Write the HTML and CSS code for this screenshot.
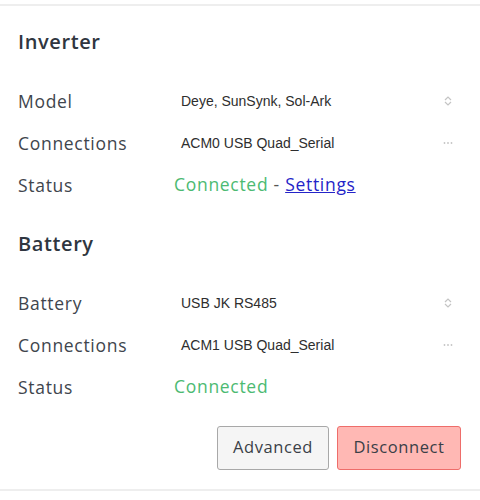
FILE: index.html
```html
<!DOCTYPE html>
<html>
<head>
<meta charset="utf-8">
<link rel="stylesheet" href="styles.css">
</head>
<body>
<div class="card">
  <section class="section first">
    <h2 class="title">Inverter</h2>
    <div class="rows">
      <div class="row">
        <span class="label">Model</span>
        <div class="select"><span class="sel-text">Deye, SunSynk, Sol-Ark</span>
          <svg class="icon" width="10" height="12" viewBox="0 0 10 12"><path d="M2 5 L5 2 L8 5 M2 7 L5 10 L8 7" fill="none" stroke="#c4c4c4" stroke-width="1.2"/></svg>
        </div>
      </div>
      <div class="row">
        <span class="label">Connections</span>
        <div class="select"><span class="sel-text">ACM0 USB Quad_Serial</span>
          <svg class="icon" width="10" height="4" viewBox="0 0 10 4"><circle cx="1.5" cy="2" r="0.9" fill="#c4c4c4"/><circle cx="5" cy="2" r="0.9" fill="#c4c4c4"/><circle cx="8.5" cy="2" r="0.9" fill="#c4c4c4"/></svg>
        </div>
      </div>
      <div class="row">
        <span class="label">Status</span>
        <div class="status"><span class="ok">Connected</span> <span class="dash">-</span> <a class="link" href="#">Settings</a></div>
      </div>
    </div>
  </section>
  <section class="section">
    <h2 class="title">Battery</h2>
    <div class="rows">
      <div class="row">
        <span class="label">Battery</span>
        <div class="select"><span class="sel-text">USB JK RS485</span>
          <svg class="icon" width="10" height="12" viewBox="0 0 10 12"><path d="M2 5 L5 2 L8 5 M2 7 L5 10 L8 7" fill="none" stroke="#c4c4c4" stroke-width="1.2"/></svg>
        </div>
      </div>
      <div class="row">
        <span class="label">Connections</span>
        <div class="select"><span class="sel-text">ACM1 USB Quad_Serial</span>
          <svg class="icon" width="10" height="4" viewBox="0 0 10 4"><circle cx="1.5" cy="2" r="0.9" fill="#c4c4c4"/><circle cx="5" cy="2" r="0.9" fill="#c4c4c4"/><circle cx="8.5" cy="2" r="0.9" fill="#c4c4c4"/></svg>
        </div>
      </div>
      <div class="row">
        <span class="label">Status</span>
        <div class="status"><span class="ok">Connected</span></div>
      </div>
    </div>
  </section>
  <div class="actions">
    <button class="btn btn-default">Advanced</button>
    <button class="btn btn-danger">Disconnect</button>
  </div>
</div>
</body>
</html>
```
FILE: styles.css
```css
html, body {
  margin: 0;
  padding: 0;
  background: #fff;
}
body {
  font-family: "Open Sans", "DejaVu Sans", sans-serif;
  color: #3a3f47;
}
.card {
  margin-top: 4px;
  border-top: 2px solid #eeeeee;
  border-bottom: 2px solid #eeeeee;
  padding: 0 18px 19px 18px;
}
.section {
  padding-top: 24px;
}
.section.first {
  padding-top: 22px;
}
.title {
  margin: 0;
  height: 28px;
  line-height: 28px;
  font-size: 20px;
  font-weight: 600;
  color: #2f3640;
  letter-spacing: 0.6px;
}
.rows {
  margin-top: 24px;
  display: flex;
  flex-direction: column;
}
.row {
  display: grid;
  grid-template-columns: 156px 1fr;
  align-items: center;
  height: 42px;
  line-height: 24px;
}
.label {
  font-size: 17.5px;
  color: #40454d;
  letter-spacing: 0.7px;
}
.select {
  display: flex;
  align-items: center;
  justify-content: space-between;
  padding: 0 9px 0 7px;
}
.sel-text {
  font-family: "Liberation Sans", Arial, sans-serif;
  font-size: 14px;
  color: #2e2e2e;
}
.icon {
  display: block;
}
.status {
  font-size: 17.5px;
  letter-spacing: 0.7px;
  margin-top: -3px;
}
.ok {
  color: #4cba72;
}
.dash {
  color: #555;
}
.link {
  color: #2424c8;
  text-decoration: underline;
}
.actions {
  margin-top: 18px;
  display: flex;
  justify-content: flex-end;
  gap: 8px;
  padding-right: 1px;
}
.btn {
  height: 44px;
  font-family: "Open Sans", sans-serif;
  font-size: 16.5px;
  letter-spacing: 0.6px;
  color: #3a3f47;
  border-radius: 3px;
  padding: 0 0 3px 0;
}
.btn-default {
  width: 112px;
  background: #f5f5f5;
  border: 1px solid #a8a8a8;
}
.btn-danger {
  width: 124px;
  background: #ffb8b4;
  border: 1px solid #ee6d6a;
}
```
